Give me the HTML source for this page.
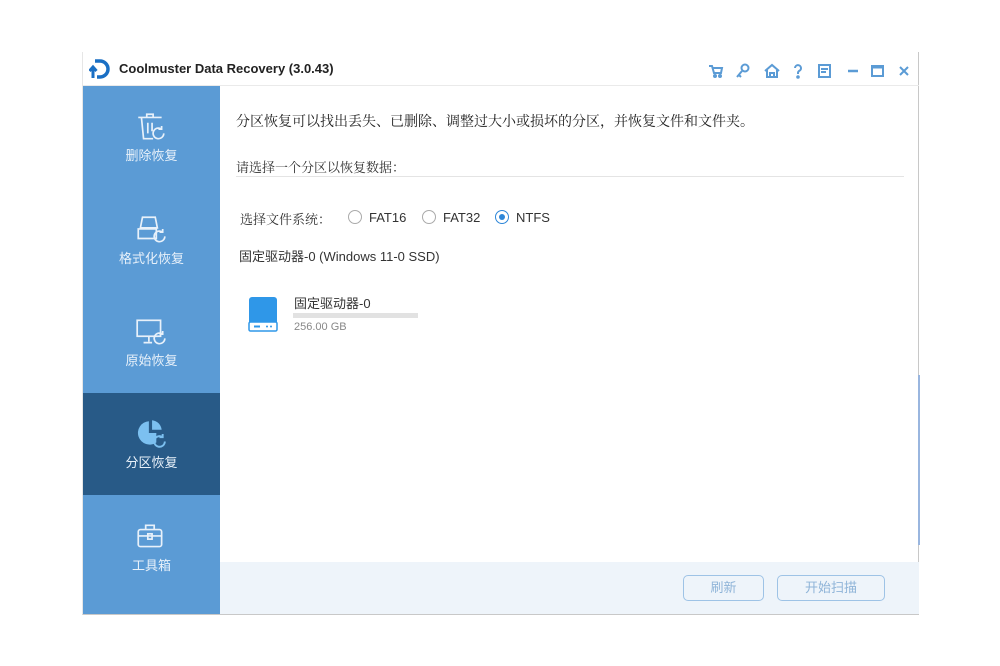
<!DOCTYPE html><html><head><meta charset="utf-8"><style>
*{margin:0;padding:0;box-sizing:border-box}
body{width:1000px;height:666px;background:#fff;position:relative;overflow:hidden;font-family:"Liberation Sans","Noto Sans CJK SC",sans-serif}
.ser{font-family:"Liberation Serif","Noto Serif CJK SC",serif}
.win{position:absolute;left:82px;top:52px;width:837px;height:563px;background:#fff;border-right:1px solid #c8c8c8;border-bottom:1px solid #c8c8c8;border-left:1px solid #e6e6e6}
.title{position:absolute;left:0;top:0;width:836px;height:34px;border-bottom:1px solid #eaeaea}
.title .t{position:absolute;left:36px;top:9px;font-size:13px;font-weight:bold;color:#222}
.side{position:absolute;left:0;top:34px;width:137px;height:528px;background:#5b9bd5}
.item{position:absolute;left:0;width:137px;height:102px;color:#e8f1fa;font-size:13px;text-align:center}
.item svg{position:absolute;left:51px;top:24px}
.item span{position:absolute;left:0;width:137px;top:59px}
.act{background:#285a87}
.abs{position:absolute;white-space:nowrap}
.bar{position:absolute;left:137px;top:510px;width:699px;height:52px;background:#eef4fa}
.btn{position:absolute;top:13px;height:26px;border:1px solid #9ec3e6;border-radius:5px;color:#8fb4d8;font-size:13px;text-align:center;line-height:24px}
.radio{position:absolute;width:14px;height:14px;border:1px solid #aaa;border-radius:50%;top:211px}
</style></head><body>
<div class="win">
 <div class="title">
  <svg class="abs" style="left:6px;top:6px" width="22" height="22" viewBox="0 0 22 22"><path d="M6 3h5a8 8 0 0 1 0 16h-3" fill="none" stroke="#1a6fc4" stroke-width="3.5"/><path d="M4 20V10M0.5 13L4 9l3.5 4" fill="none" stroke="#1a6fc4" stroke-width="3"/></svg>
  <div class="t">Coolmuster Data Recovery (3.0.43)</div>
  <svg class="abs" style="left:625px;top:11px" width="210" height="16" viewBox="0 0 210 16" fill="none" stroke="#5b9bd5" stroke-width="2">
   <path d="M1 3h3l2 7h7l1-5H5" /><circle cx="7" cy="13" r="1" fill="#5b9bd5"/><circle cx="12" cy="13" r="1" fill="#5b9bd5"/>
   <circle cx="37" cy="5" r="3.5"/><path d="M34 8l-5 6M31 12l2 2"/>
   <path d="M57 8l7-6 7 6M59 7v7h10V7"/><path d="M62 14v-4h4v4"/>
   <path d="M87 5a3 3 0 1 1 4 3c-1 1-1 1-1 3" /><circle cx="90" cy="14" r="0.8" fill="#5b9bd5"/>
   <rect x="111" y="2" width="11" height="12"/><path d="M113 6h7M113 9h5"/>
   <path d="M140 8h10" stroke-width="2.5"/>
   <rect x="164" y="3" width="11" height="10"/><path d="M164 4h11" stroke-width="3"/>
   <path d="M192 4l8 8M200 4l-8 8"/>
  </svg>
 </div>
 <div class="side">
  <div class="item" style="top:0"><svg width="34" height="34" viewBox="0 0 32 32" fill="none" stroke="#e8f1fa" stroke-width="1.6"><path d="M4 7h22M12 7V4h6v3M7 7l2 20h9M13 12v10M17 12v8"/><path d="M28 22a5 5 0 1 1-2-4M26 15v3h-3"/></svg><span>删除恢复</span></div>
  <div class="item" style="top:103px"><svg width="34" height="34" viewBox="0 0 32 32" fill="none" stroke="#e8f1fa" stroke-width="1.6"><path d="M8 4h12l2 10H6zM4 15h17v9H4z"/><path d="M29 22a5 5 0 1 1-2-4M27 15v3h-3"/></svg><span>格式化恢复</span></div>
  <div class="item" style="top:205px"><svg width="34" height="34" viewBox="0 0 32 32" fill="none" stroke="#e8f1fa" stroke-width="1.6"><rect x="3" y="5" width="22" height="15"/><path d="M14 20v5M9 26h8"/><path d="M29 22a5 5 0 1 1-2-4M27 15v3h-3"/></svg><span>原始恢复</span></div>
  <div class="item act" style="top:307px"><svg width="34" height="34" viewBox="0 0 32 32"><path d="M14 4a11 11 0 1 0 7 20V15h-7z" fill="#7cc0f0"/><path d="M17 3a10 10 0 0 1 9 9h-9z" fill="#7cc0f0"/><path d="M29 23a5 5 0 1 1-2-4M27 16v3h-3" fill="none" stroke="#7cc0f0" stroke-width="1.8"/></svg><span>分区恢复</span></div>
  <div class="item" style="top:410px"><svg width="34" height="34" viewBox="0 0 32 32" fill="none" stroke="#e8f1fa" stroke-width="1.6"><rect x="4" y="9" width="22" height="16" rx="2"/><path d="M11 9V5h8v4M4 15h22"/><rect x="13" y="13" width="4" height="5"/></svg><span>工具箱</span></div>
 </div>
 <div class="abs ser" style="left:153px;top:59px;font-size:14px;color:#222">分区恢复可以找出丢失、已删除、调整过大小或损坏的分区，并恢复文件和文件夹。</div>
 <div class="abs ser" style="left:153px;top:105px;font-size:13px;color:#333">请选择一个分区以恢复数据：</div>
 <div class="abs" style="left:153px;top:124px;width:668px;height:1px;background:#e4e4e4"></div>
 <div class="abs ser" style="left:157px;top:157px;font-size:13px;color:#333">选择文件系统：</div>
 <div class="radio" style="left:265px;top:158px"></div><div class="abs" style="left:286px;top:158px;font-size:13px;color:#333">FAT16</div>
 <div class="radio" style="left:339px;top:158px"></div><div class="abs" style="left:360px;top:158px;font-size:13px;color:#333">FAT32</div>
 <div class="radio" style="left:412px;top:158px;border-color:#2d86d8"><div style="width:6px;height:6px;border-radius:50%;background:#2d86d8;margin:3px"></div></div><div class="abs" style="left:433px;top:158px;font-size:13px;color:#333">NTFS</div>
 <div class="abs" style="left:156px;top:194px;font-size:13px;color:#333">固定驱动器-0 (Windows 11-0 SSD)</div>
 <svg class="abs" style="left:163px;top:243px" width="34" height="38" viewBox="0 0 34 38"><path d="M6 2h22a3 3 0 0 1 3 3v22H3V5a3 3 0 0 1 3-3z" fill="#2f97e8"/><rect x="3" y="27" width="28" height="9" rx="1.5" fill="#fff" stroke="#2f97e8" stroke-width="1.5"/><rect x="8" y="30.5" width="6" height="2" fill="#2f97e8"/><circle cx="21" cy="31.5" r="1" fill="#2f97e8"/><circle cx="25" cy="31.5" r="1" fill="#2f97e8"/></svg>
 <div class="abs" style="left:211px;top:241px;font-size:13px;color:#333">固定驱动器-0</div>
 <div class="abs" style="left:210px;top:261px;width:125px;height:5px;background:#e2e2e2"></div>
 <div class="abs" style="left:211px;top:269px;font-size:11px;color:#888">256.00 GB</div>
 <div class="abs" style="left:835px;top:323px;width:2px;height:170px;background:#9ab6df"></div>
 <div class="bar">
  <div class="btn" style="left:463px;width:81px">刷新</div>
  <div class="btn" style="left:557px;width:108px">开始扫描</div>
 </div>
</div>
</body></html>
